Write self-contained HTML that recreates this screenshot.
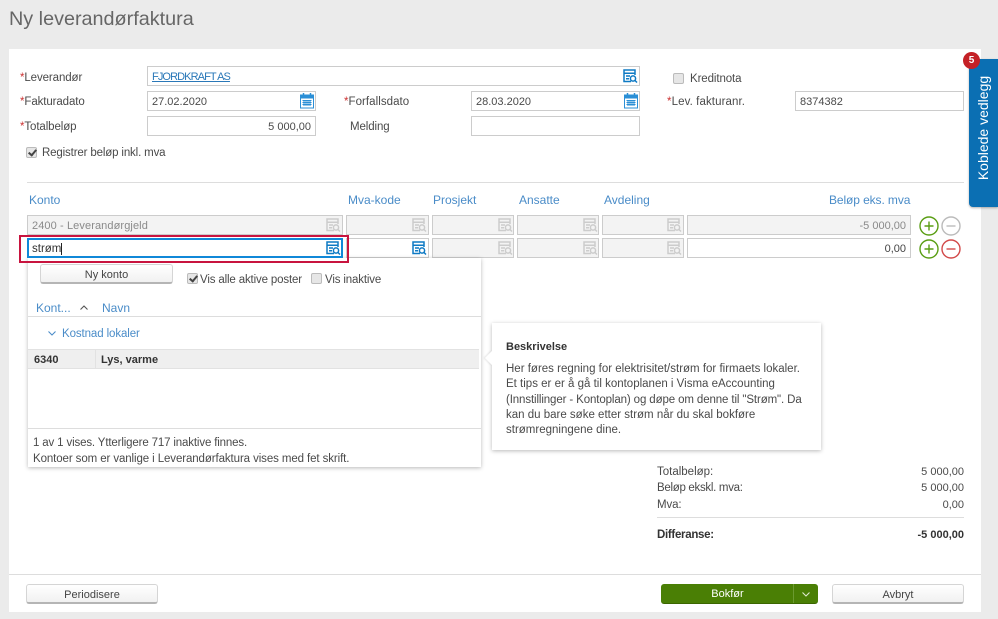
<!DOCTYPE html>
<html><head><meta charset="utf-8"><style>
html,body{margin:0;padding:0}
body{width:998px;height:619px;position:relative;overflow:hidden;background:#ebebeb;font-family:"Liberation Sans",sans-serif;font-size:11.5px;color:#4a4a4a}
.a{position:absolute;white-space:nowrap}
.t{position:absolute;white-space:nowrap;line-height:14px;letter-spacing:-.1px}
.n{font-size:11px;letter-spacing:0}
.i{position:absolute;box-sizing:border-box;height:20px;border:1px solid #ccc;background:#fff;line-height:20px;padding:0 4px;white-space:nowrap;font-size:11px}
.d{background:#f3f3f3;color:#8a8a8a}
.h{position:absolute;top:193px;color:#4a8cc8;font-size:12px;line-height:14px;white-space:nowrap}
.r{color:#c33}
.cb{position:absolute;box-sizing:border-box;width:11px;height:11px;border:1px solid #bbb;border-radius:2px;background:#e6e6e6}
.cb.c:after{content:"";position:absolute;left:3px;top:0;width:3px;height:6px;border:solid #444;border-width:0 2px 2px 0;transform:rotate(40deg)}
.b{position:absolute;box-sizing:border-box;height:20px;text-align:center;line-height:20px;font-size:11px;background:linear-gradient(#fff,#f1f1f1);border:1px solid #d5d5d5;border-bottom:2px solid #b5b5b5;border-radius:3px;color:#444}
svg{position:absolute;overflow:visible}
</style></head><body>
<div class="a" style="left:9px;top:7px;font-size:19.8px;line-height:24px;color:#666">Ny leverandørfaktura</div>
<div class="a" style="left:9px;top:49px;width:972px;height:563px;background:#fff"></div>
<div class="a" style="left:9px;top:574px;width:972px;height:1px;background:#ddd"></div>

<div class="t" style="left:20px;top:71px"><span class="r">*</span>Leverandør</div>
<div class="i" style="left:147px;top:66px;width:493px;color:#2a78b8;text-decoration:underline;font-size:11px;letter-spacing:-.9px">FJORDKRAFT AS</div>
<div class="cb" style="left:673px;top:73px"></div>
<div class="t" style="left:690px;top:72px">Kreditnota</div>
<div class="t" style="left:20px;top:95px"><span class="r">*</span>Fakturadato</div>
<div class="i" style="left:147px;top:91px;width:169px">27.02.2020</div>
<div class="t" style="left:344px;top:95px;letter-spacing:.05px"><span class="r">*</span>Forfallsdato</div>
<div class="i" style="left:471px;top:91px;width:169px">28.03.2020</div>
<div class="t" style="left:667px;top:95px;letter-spacing:.1px"><span class="r">*</span>Lev. fakturanr.</div>
<div class="i" style="left:795px;top:91px;width:169px">8374382</div>
<div class="t" style="left:20px;top:120px"><span class="r">*</span>Totalbeløp</div>
<div class="i" style="left:147px;top:116px;width:169px;text-align:right">5 000,00</div>
<div class="t" style="left:350px;top:120px">Melding</div>
<div class="i" style="left:471px;top:116px;width:169px"></div>
<div class="cb c" style="left:26px;top:147px"></div>
<div class="t" style="left:42px;top:146px;letter-spacing:-.15px">Registrer beløp inkl. mva</div>
<div class="a" style="left:27px;top:182px;width:937px;height:1px;background:#ddd"></div>

<svg width="0" height="0" style="left:0;top:0">
<defs>
<g id="s" fill="none" stroke-width="1.5"><path d="M8 12.500H1V1h11v5M1 4.200h11M3 7h4M3 9.700h3"/><circle cx="10" cy="9.500" r="2.600"/><path d="M12 11.500l2 2"/></g>
<g id="k"><rect x="0.500" y="2" width="13" height="13" fill="#fff" stroke="#2b8fd6"/><rect x="0.500" y="2" width="13" height="3.500" fill="#2b8fd6"/><path d="M3.500 0v3M10.500 0v3" stroke="#2b8fd6" stroke-width="1.500"/><path d="M2.500 7.500h9M2.500 9.500h9M2.500 11.500h9M4 7v6M6 7v6M8 7v6M10 7v6" stroke="#2b8fd6" stroke-width="1"/></g>
<g id="p" fill="none" stroke-width="1.400"><circle cx="10" cy="10" r="9"/><path d="M5.500 10h9M10 5.500v9"/></g>
<g id="m" fill="none" stroke-width="1.400"><circle cx="10" cy="10" r="9"/><path d="M5.500 10h9"/></g>
</defs></svg>
<svg style="left:623px;top:69px" width="14" height="14"><use href="#s" stroke="#0e7ac4"/></svg>
<svg style="left:300px;top:93px" width="14" height="15"><use href="#k"/></svg>
<svg style="left:624px;top:93px" width="14" height="15"><use href="#k"/></svg>

<div class="h" style="left:29px">Konto</div>
<div class="h" style="left:348px">Mva-kode</div>
<div class="h" style="left:433px">Prosjekt</div>
<div class="h" style="left:519px">Ansatte</div>
<div class="h" style="left:604px">Avdeling</div>
<div class="h" style="left:829px;letter-spacing:-.1px">Beløp eks. mva</div>

<div class="i d" style="left:27px;top:215px;width:316px;letter-spacing:.1px">2400 - Leverandørgjeld</div>
<div class="i d" style="left:346px;top:215px;width:83px"></div>
<div class="i d" style="left:432px;top:215px;width:82px"></div>
<div class="i d" style="left:517px;top:215px;width:82px"></div>
<div class="i d" style="left:602px;top:215px;width:82px"></div>
<div class="i d" style="left:687px;top:215px;width:224px;text-align:right">-5 000,00</div>
<svg style="left:326px;top:218px" width="14" height="14"><use href="#s" stroke="#ccc"/></svg>
<svg style="left:412px;top:218px" width="14" height="14"><use href="#s" stroke="#ccc"/></svg>
<svg style="left:498px;top:218px" width="14" height="14"><use href="#s" stroke="#ccc"/></svg>
<svg style="left:583px;top:218px" width="14" height="14"><use href="#s" stroke="#ccc"/></svg>
<svg style="left:667px;top:218px" width="14" height="14"><use href="#s" stroke="#ccc"/></svg>
<svg style="left:919px;top:216px" width="20" height="20"><use href="#p" stroke="#5a9e14"/></svg>
<svg style="left:941px;top:216px" width="20" height="20"><use href="#m" stroke="#bbb"/></svg>

<div class="i" style="left:346px;top:238px;width:83px"></div>
<div class="i d" style="left:432px;top:238px;width:82px"></div>
<div class="i d" style="left:517px;top:238px;width:82px"></div>
<div class="i d" style="left:602px;top:238px;width:82px"></div>
<div class="i" style="left:687px;top:238px;width:224px;text-align:right;color:#444">0,00</div>
<svg style="left:412px;top:241px" width="14" height="14"><use href="#s" stroke="#0e7ac4"/></svg>
<svg style="left:498px;top:241px" width="14" height="14"><use href="#s" stroke="#ccc"/></svg>
<svg style="left:583px;top:241px" width="14" height="14"><use href="#s" stroke="#ccc"/></svg>
<svg style="left:667px;top:241px" width="14" height="14"><use href="#s" stroke="#ccc"/></svg>
<svg style="left:919px;top:239px" width="20" height="20"><use href="#p" stroke="#5a9e14"/></svg>
<svg style="left:941px;top:239px" width="20" height="20"><use href="#m" stroke="#d24a4a"/></svg>

<div class="a" style="left:28px;top:258px;width:453px;height:209px;background:#fff;box-shadow:0 1px 4px rgba(0,0,0,.28)"></div>
<div class="a" style="left:19px;top:235px;width:330px;height:28px;box-sizing:border-box;border:2px solid #c8143f"></div>
<div class="i" style="left:27px;top:238px;width:316px;border:2px solid #1088d8;line-height:18px;padding:0 3px;color:#333;font-size:11.5px">strøm<span style="border-left:1px solid #222"></span></div>
<svg style="left:326px;top:241px" width="14" height="14"><use href="#s" stroke="#0e7ac4"/></svg>

<div class="b" style="left:40px;top:264px;width:133px">Ny konto</div>
<div class="cb c" style="left:187px;top:273px"></div>
<div class="t" style="left:200px;top:273px;letter-spacing:-.15px">Vis alle aktive poster</div>
<div class="cb" style="left:311px;top:273px"></div>
<div class="t" style="left:325px;top:273px;letter-spacing:-.15px">Vis inaktive</div>
<div class="h" style="left:36px;top:301px">Kont...</div>
<svg style="left:80px;top:305px" width="8" height="5"><path d="M0.500 4.500L4 1l3.500 3.500" fill="none" stroke="#555" stroke-width="1.100"/></svg>
<div class="h" style="left:102px;top:301px">Navn</div>
<div class="a" style="left:28px;top:316px;width:453px;height:1px;background:#ddd"></div>
<svg style="left:48px;top:331px" width="8" height="5"><path d="M0.500 0.500L4 4l3.500-3.500" fill="none" stroke="#4a8cc8" stroke-width="1.100"/></svg>
<div class="t" style="left:62px;top:327px;color:#4a8cc8">Kostnad lokaler</div>
<div class="a" style="left:28px;top:349px;width:451px;height:20px;box-sizing:border-box;background:#efefef;border-top:1px solid #e2e2e2;border-bottom:1px solid #e2e2e2"></div>
<div class="a" style="left:95px;top:350px;width:1px;height:18px;background:#e2e2e2"></div>
<div class="t n" style="left:34px;top:353px;font-weight:bold;color:#333">6340</div>
<div class="t n" style="left:101px;top:353px;font-weight:bold;color:#333">Lys, varme</div>
<div class="a" style="left:28px;top:428px;width:453px;height:1px;background:#ddd"></div>
<div class="t" style="left:33px;top:436px;letter-spacing:-.15px">1 av 1 vises. Ytterligere 717 inaktive finnes.</div>
<div class="t" style="left:33px;top:452px">Kontoer som er vanlige i Leverandørfaktura vises med fet skrift.</div>

<div class="a" style="left:492px;top:323px;width:329px;height:127px;background:#fff;box-shadow:0 1px 4px rgba(0,0,0,.28)"></div>
<div class="a" style="left:487px;top:353px;width:10px;height:10px;background:#fff;transform:rotate(45deg);box-shadow:-1px 1px 2px rgba(0,0,0,.1)"></div>
<div class="a" style="left:492px;top:345px;width:16px;height:26px;background:#fff"></div>
<div class="t n" style="left:506px;top:340px;font-weight:bold;color:#333">Beskrivelse</div>
<div class="a" style="left:506px;top:362px;line-height:15.300px">Her føres regning for elektrisitet/strøm for firmaets lokaler.<br>Et tips er er å gå til kontoplanen i Visma eAccounting<br><span style="letter-spacing:-.12px">(Innstillinger - Kontoplan) og døpe om denne til "Strøm". Da</span><br>kan du bare søke etter strøm når du skal bokføre<br>strømregningene dine.</div>

<div class="t" style="left:657px;top:465px;letter-spacing:0">Totalbeløp:</div><div class="t n" style="right:34px;top:465px">5 000,00</div>
<div class="t" style="left:657px;top:481px;letter-spacing:-.3px">Beløp ekskl. mva:</div><div class="t n" style="right:34px;top:481px">5 000,00</div>
<div class="t" style="left:657px;top:498px">Mva:</div><div class="t n" style="right:34px;top:498px">0,00</div>
<div class="a" style="left:657px;top:517px;width:307px;height:1px;background:#ddd"></div>
<div class="t" style="left:657px;top:528px;font-weight:bold;color:#333;letter-spacing:-.3px">Differanse:</div><div class="t n" style="right:34px;top:528px;font-weight:bold;color:#333">-5 000,00</div>

<div class="a" style="left:969px;top:59px;width:29px;height:148px;background:#0b6fb3;border-radius:4px 0 0 4px;box-shadow:0 1px 2px rgba(0,0,0,.3)"></div>
<div class="a" style="left:983px;top:128px;width:0;height:0"><div style="position:absolute;left:-60px;top:-8px;width:120px;height:16px;line-height:16px;transform:rotate(-90deg);color:#fff;font-size:14px;text-align:center">Koblede vedlegg</div></div>
<div class="a" style="left:963px;top:52px;width:17px;height:17px;border-radius:50%;background:#c42126;color:#fff;font-size:10px;font-weight:bold;line-height:17px;text-align:center">5</div>

<div class="b" style="left:26px;top:584px;width:132px">Periodisere</div>
<div class="a" style="left:661px;top:584px;width:157px;height:20px;background:#4a7f05;border-radius:3px;border-bottom:1px solid #3a6600;box-sizing:border-box"></div>
<div class="a" style="left:661px;top:584px;width:133px;height:19px;line-height:20px;font-size:11px;text-align:center;color:#fff">Bokfør</div>
<div class="a" style="left:793px;top:584px;width:1px;height:19px;background:#6b9a30"></div>
<svg style="left:802px;top:592px" width="8" height="5"><path d="M0.500 0.500L4 4l3.500-3.500" fill="none" stroke="#dfe9cf" stroke-width="1.100"/></svg>
<div class="b" style="left:832px;top:584px;width:132px">Avbryt</div>
</body></html>
